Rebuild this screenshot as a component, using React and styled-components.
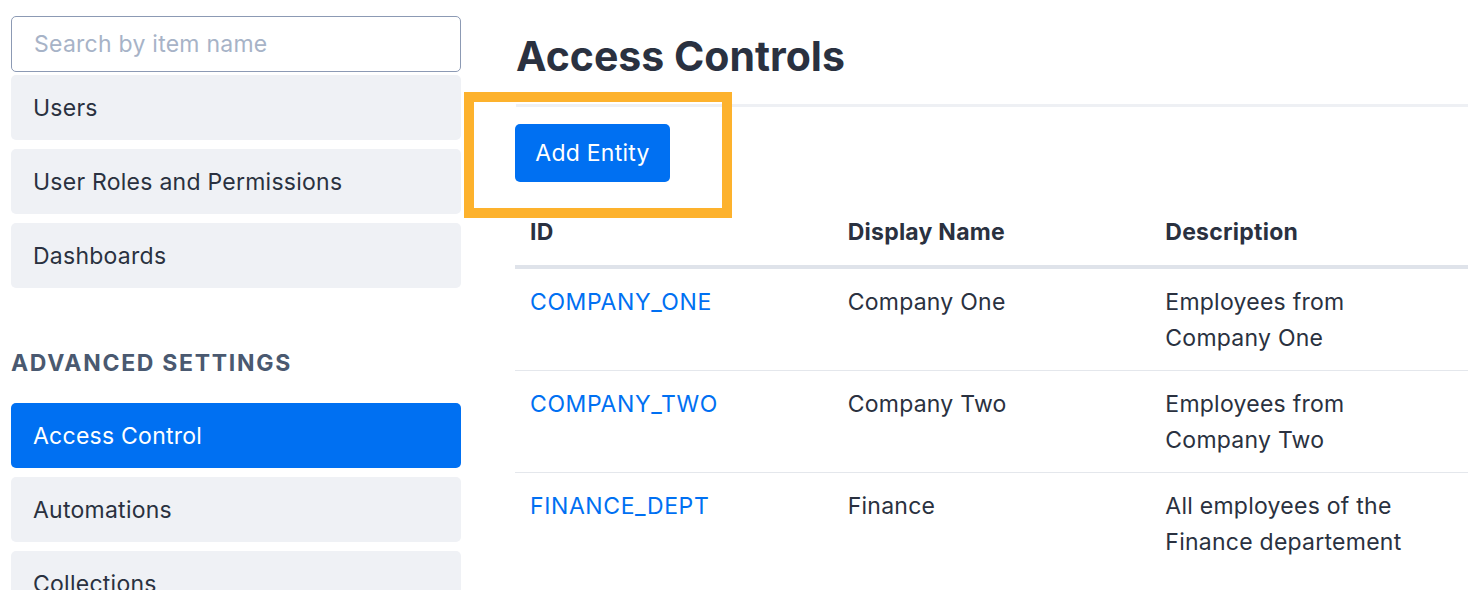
import React from 'react';
import styled, { createGlobalStyle } from 'styled-components';

const GlobalStyle = createGlobalStyle`
  body {
    margin: 0;
    background: #ffffff;
    font-family: Inter, "Noto Sans", "Liberation Sans", sans-serif;
    color: #2a3140;
  }
`;

const Page = styled.div`
  display: flex;
  gap: 54px;
  padding: 16px 12px 0 11px;
  height: 590px;
  box-sizing: border-box;
  overflow: hidden;
  font-size: 23px;
  letter-spacing: 0.25px;
`;

const Sidebar = styled.aside`
  width: 450px;
  flex-shrink: 0;
  display: flex;
  flex-direction: column;
  & > * {
    flex-shrink: 0;
  }
`;

const Search = styled.input`
  box-sizing: border-box;
  width: 100%;
  height: 56px;
  border: 1px solid #8c9ab4;
  border-radius: 5px;
  padding: 0 22px;
  font-family: inherit;
  font-size: 23px;
  letter-spacing: 0.25px;
  color: #2a3140;
  margin-bottom: 3px;
  outline: none;
  &::placeholder {
    color: #a7b3c7;
  }
`;

const NavList = styled.div`
  display: flex;
  flex-direction: column;
  gap: 9px;
`;

const NavItem = styled.div`
  height: 65px;
  flex-shrink: 0;
  box-sizing: border-box;
  display: flex;
  align-items: center;
  padding: 0 22px;
  border-radius: 5px;
  background: ${(p) => (p.$active ? '#0070f2' : '#eff1f5')};
  color: ${(p) => (p.$active ? '#ffffff' : '#2a3140')};
`;

const SectionLabel = styled.div`
  font-weight: 700;
  letter-spacing: 1.7px;
  color: #4a5970;
  margin: 60px 0 25px;
  line-height: 30px;
`;

const Main = styled.main`
  flex: 1;
  min-width: 0;
  display: flex;
  flex-direction: column;
`;

const Title = styled.h1`
  margin: 12px 0 0 1px;
  font-size: 41px;
  font-weight: 700;
  letter-spacing: 0;
  line-height: 56px;
  color: #2a3140;
  padding-bottom: 20px;
  border-bottom: 3px solid #eef0f4;
`;

const Toolbar = styled.div`
  position: relative;
  padding-top: 17px;
  padding-bottom: 17px;
`;

const Highlight = styled.div`
  position: absolute;
  left: -51px;
  top: -15px;
  width: 268px;
  height: 126px;
  box-sizing: border-box;
  border: 10px solid #fdb22d;
  pointer-events: none;
`;

const PrimaryButton = styled.button`
  height: 58px;
  width: 155px;
  border: none;
  border-radius: 5px;
  background: #0070f2;
  color: #ffffff;
  font-family: inherit;
  font-size: 23px;
  letter-spacing: 0.25px;
  cursor: pointer;
`;

const Table = styled.table`
  width: 100%;
  border-collapse: collapse;
  table-layout: fixed;
`;

const Th = styled.th`
  text-align: left;
  font-weight: 700;
  line-height: 36px;
  padding: 15px 15px;
  border-bottom: 4px solid #dfe3ea;
  color: #2a3140;
`;

const Row = styled.tr`
  border-bottom: 1px solid #e4e7ec;
  &:last-child {
    border-bottom: none;
  }
`;

const Td = styled.td`
  vertical-align: top;
  line-height: 36px;
  padding: 15px 15px 14px;
  color: #2a3140;
`;

const IdLink = styled.a`
  color: #0070f2;
  text-decoration: none;
  letter-spacing: 0.6px;
`;

const Desc = styled.div`
  max-width: 255px;
`;

const items = ['Users', 'User Roles and Permissions', 'Dashboards'];
const advanced = ['Access Control', 'Automations', 'Collections'];

const entities = [
  { id: 'COMPANY_ONE', name: 'Company One', desc: 'Employees from Company One' },
  { id: 'COMPANY_TWO', name: 'Company Two', desc: 'Employees from Company Two' },
  { id: 'FINANCE_DEPT', name: 'Finance', desc: 'All employees of the Finance departement' },
];

export default function App() {
  return (
    <>
      <GlobalStyle />
      <Page>
        <Sidebar>
          <Search placeholder="Search by item name" />
          <NavList>
            {items.map((t) => (
              <NavItem key={t}>{t}</NavItem>
            ))}
          </NavList>
          <SectionLabel>ADVANCED SETTINGS</SectionLabel>
          <NavList>
            {advanced.map((t) => (
              <NavItem key={t} $active={t === 'Access Control'}>
                {t}
              </NavItem>
            ))}
          </NavList>
        </Sidebar>
        <Main>
          <Title>Access Controls</Title>
          <Toolbar>
            <PrimaryButton>Add Entity</PrimaryButton>
            <Highlight />
          </Toolbar>
          <Table>
            <thead>
              <tr>
                <Th>ID</Th>
                <Th>Display Name</Th>
                <Th>Description</Th>
              </tr>
            </thead>
            <tbody>
              {entities.map((e) => (
                <Row key={e.id}>
                  <Td>
                    <IdLink href="#">{e.id}</IdLink>
                  </Td>
                  <Td>{e.name}</Td>
                  <Td>
                    <Desc>{e.desc}</Desc>
                  </Td>
                </Row>
              ))}
            </tbody>
          </Table>
        </Main>
      </Page>
    </>
  );
}
